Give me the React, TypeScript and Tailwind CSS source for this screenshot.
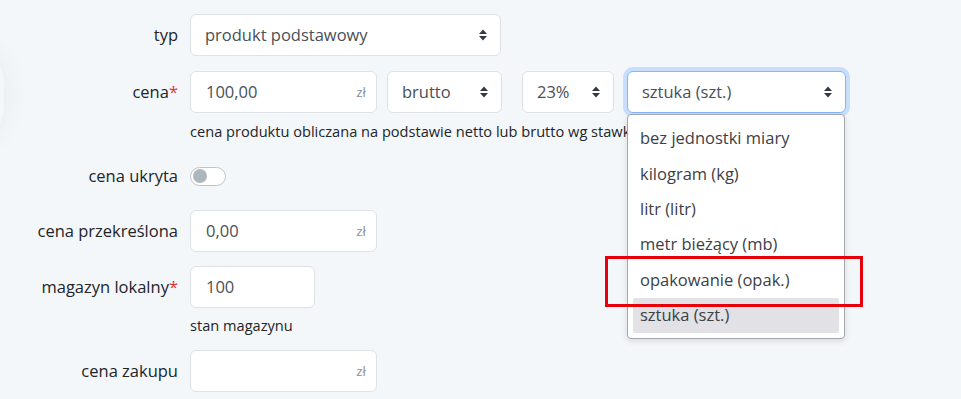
import React from 'react';

const font = { fontFamily: '"Open Sans", Lato, sans-serif' };

function Arrows() {
  return (
    <svg width="10" height="14" viewBox="0 0 10 14" className="shrink-0">
      <path d="M1 6 L5 1.5 L9 6 Z" fill="#343a40" />
      <path d="M1 8 L5 12.5 L9 8 Z" fill="#343a40" />
    </svg>
  );
}

function Select({ value, className, focused }: { value: string; className: string; focused?: boolean }) {
  return (
    <div
      className={`h-[42px] flex items-center justify-between rounded-md bg-white pl-[14px] pr-[12px] text-[16.5px] text-[#495057] ${
        focused ? 'border border-[#86b7fe] ring-4 ring-[#c9defc]' : 'border border-[#dee2e6]'
      } ${className}`}
    >
      <span>{value}</span>
      <Arrows />
    </div>
  );
}

function Money({ value, className }: { value: string; className: string }) {
  return (
    <div className={`h-[42px] flex items-center justify-between rounded-md border border-[#dee2e6] bg-white pl-[15px] pr-[10px] ${className}`}>
      <span className="text-[16.5px] text-[#495057]">{value}</span>
      <span className="text-[13.5px] text-[#8a9299]">zł</span>
    </div>
  );
}

function Label({ children, req }: { children: React.ReactNode; req?: boolean }) {
  return (
    <div className="w-[178px] shrink-0 text-right text-[16.5px] leading-[24px] text-[#212529]">
      {children}
      {req && <span className="text-[#e3342f]">*</span>}
    </div>
  );
}

const units = ['bez jednostki miary', 'kilogram (kg)', 'litr (litr)', 'metr bieżący (mb)', 'opakowanie (opak.)', 'sztuka (szt.)'];

export default function App() {
  return (
    <div className="relative w-[961px] h-[399px] overflow-hidden bg-[#f4f7fa]" style={font}>
      {/* faint shadow of a card at left edge */}
      <div className="absolute left-[-60px] top-[50px] w-[64px] h-[90px] rounded-full shadow-[0_0_30px_rgba(0,0,0,0.06)]" />

      <div className="pt-[14px] flex flex-col">
        <div className="flex items-center gap-[12px]">
          <Label>typ</Label>
          <Select value="produkt podstawowy" className="w-[311px]" />
        </div>

        <div className="mt-[15px] flex items-center gap-[12px]">
          <Label req>cena</Label>
          <div className="flex items-center">
            <Money value="100,00" className="w-[187px]" />
            <Select value="brutto" className="w-[115px] ml-[10px]" />
            <Select value="23%" className="w-[92px] ml-[20px]" />
            <Select value="sztuka (szt.)" className="w-[219px] ml-[13px]" focused />
          </div>
        </div>

        <div className="ml-[190px] mt-[8px] text-[14.6px] leading-[20px] text-[#212529] whitespace-nowrap">
          cena produktu obliczana na podstawie netto lub brutto wg stawki VAT
        </div>

        <div className="mt-[23px] flex items-center gap-[12px]">
          <Label>cena ukryta</Label>
          <div className="w-[36px] h-[19px] rounded-full border border-[#bfc4c9] bg-white flex items-center px-[2px]">
            <div className="w-[14px] h-[14px] rounded-full bg-[#adb5bd]" />
          </div>
        </div>

        <div className="mt-[22px] flex items-center gap-[12px]">
          <Label>cena przekreślona</Label>
          <Money value="0,00" className="w-[187px] h-[41px]" />
        </div>

        <div className="mt-[14px] flex items-center gap-[12px]">
          <Label req>magazyn lokalny</Label>
          <div className="w-[125px] h-[42px] flex items-center rounded-md border border-[#dee2e6] bg-white pl-[15px] text-[16.5px] text-[#495057]">
            100
          </div>
        </div>
        <div className="ml-[190px] mt-[7px] text-[14.6px] leading-[20px] text-[#212529]">stan magazynu</div>

        <div className="mt-[15px] flex items-center gap-[12px]">
          <Label>cena zakupu</Label>
          <Money value="" className="w-[187px] h-[41px]" />
        </div>
      </div>

      {/* open dropdown list */}
      <div className="absolute left-[627px] top-[114px] w-[218px] h-[225px] rounded-[4px] border border-[#a5a8ad] bg-white shadow-[0_2px_6px_rgba(0,0,0,0.12)] py-[2px] text-[16.5px] text-[#3c4146]">
        {units.map((u, i) => (
          <div
            key={u}
            className={`h-[35.4px] flex items-center pl-[7px] mx-[5px] rounded-[2px] ${i === 0 ? 'mt-[4px]' : ''} ${
              i === units.length - 1 ? 'bg-[#e1e1e6]' : ''
            }`}
          >
            {u}
          </div>
        ))}
      </div>

      {/* annotation */}
      <div className="absolute left-[605px] top-[256px] w-[258px] h-[51px] border-[3px] border-[#e6000a]" />
    </div>
  );
}
